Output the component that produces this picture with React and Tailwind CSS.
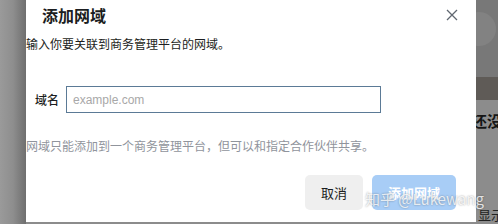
export default function App() {
  return (
    <div className="relative flex h-[224px] w-[498px] overflow-hidden bg-[#8c8c8c] font-['Noto_Sans_CJK_SC','Noto_Sans',sans-serif]">
      {/* dimmed page, left */}
      <div className="h-full w-[26px] shrink-0 bg-gradient-to-r from-[#9a9a9a] via-[#8e8e8e] to-[#6f6f6f]" />

      {/* modal */}
      <div className="relative z-10 flex h-[222px] w-[450px] shrink-0 flex-col bg-white">
        <div className="relative mt-[5px] flex h-[20px] items-center pl-[16px]">
          <h2 className="text-[16px] font-bold leading-[20px] text-[#1c1e21]">添加网域</h2>
          <button type="button" className="absolute right-[18px] top-[4px] text-[#606770]" aria-label="关闭">
            <svg viewBox="0 0 12 12" className="h-[12px] w-[12px]" fill="none" stroke="currentColor" strokeWidth="1.3">
              <path d="M1 1 11 11M11 1 1 11" />
            </svg>
          </button>
        </div>

        <p className="mt-[11px] whitespace-nowrap text-[12px] leading-[16px] text-[#1c1e21]">
          输入你要关联到商务管理平台的网域。
        </p>

        <div className="mt-[34px] flex items-center">
          <label className="ml-[9px] w-[31px] text-[12px] font-medium text-[#1c1e21]">域名</label>
          <input
            type="text"
            placeholder="example.com"
            className="h-[27px] w-[315px] border border-[#5b7a96] px-[6px] text-[12px] text-[#1c1e21] outline-none placeholder:text-[#a8a8a8] font-['Liberation_Sans',sans-serif]"
          />
        </div>

        <p className="mt-[25px] whitespace-nowrap text-[12px] leading-[16px] text-[#90949c]">
          网域只能添加到一个商务管理平台，但可以和指定合作伙伴共享。
        </p>

        <div className="mt-[21px] flex justify-end gap-[9px] pr-[20px]">
          <button type="button" className="h-[35px] w-[58px] rounded-[5px] bg-[#efefef] text-[13px] text-[#1c1e21]">
            取消
          </button>
          <button type="button" className="h-[35px] w-[84px] rounded-[5px] bg-[#a8cdf6] text-[13px] font-bold text-white">
            添加网域
          </button>
        </div>
      </div>

      {/* dimmed page, right */}
      <div className="flex h-full flex-1 flex-col">
        <div className="relative h-[77px] overflow-hidden bg-[#787878]">
          <div className="absolute -left-[14px] top-[12px] h-[34px] w-[34px] rounded-full bg-[#828282]" />
        </div>
        <div className="h-[23px] bg-[#5f5b57]" />
        <div className="flex flex-1 flex-col bg-[#8c8c8c]">
          <span className="-ml-[4px] mt-[11px] whitespace-nowrap text-[15px] font-bold leading-[20px] text-[#151515]">还没</span>
          <span className="mt-auto mb-[1px] whitespace-nowrap pl-[2px] text-[13px] leading-[16px] text-[#222]">显示</span>
        </div>
      </div>

      {/* watermark */}
      <div className="pointer-events-none absolute left-[365px] top-[189px] z-20 whitespace-nowrap text-[15px] leading-[20px] text-white/80 [text-shadow:0_0_2px_rgba(0,0,0,0.4)]">
        知乎 @Lukewang
      </div>
    </div>
  )
}
